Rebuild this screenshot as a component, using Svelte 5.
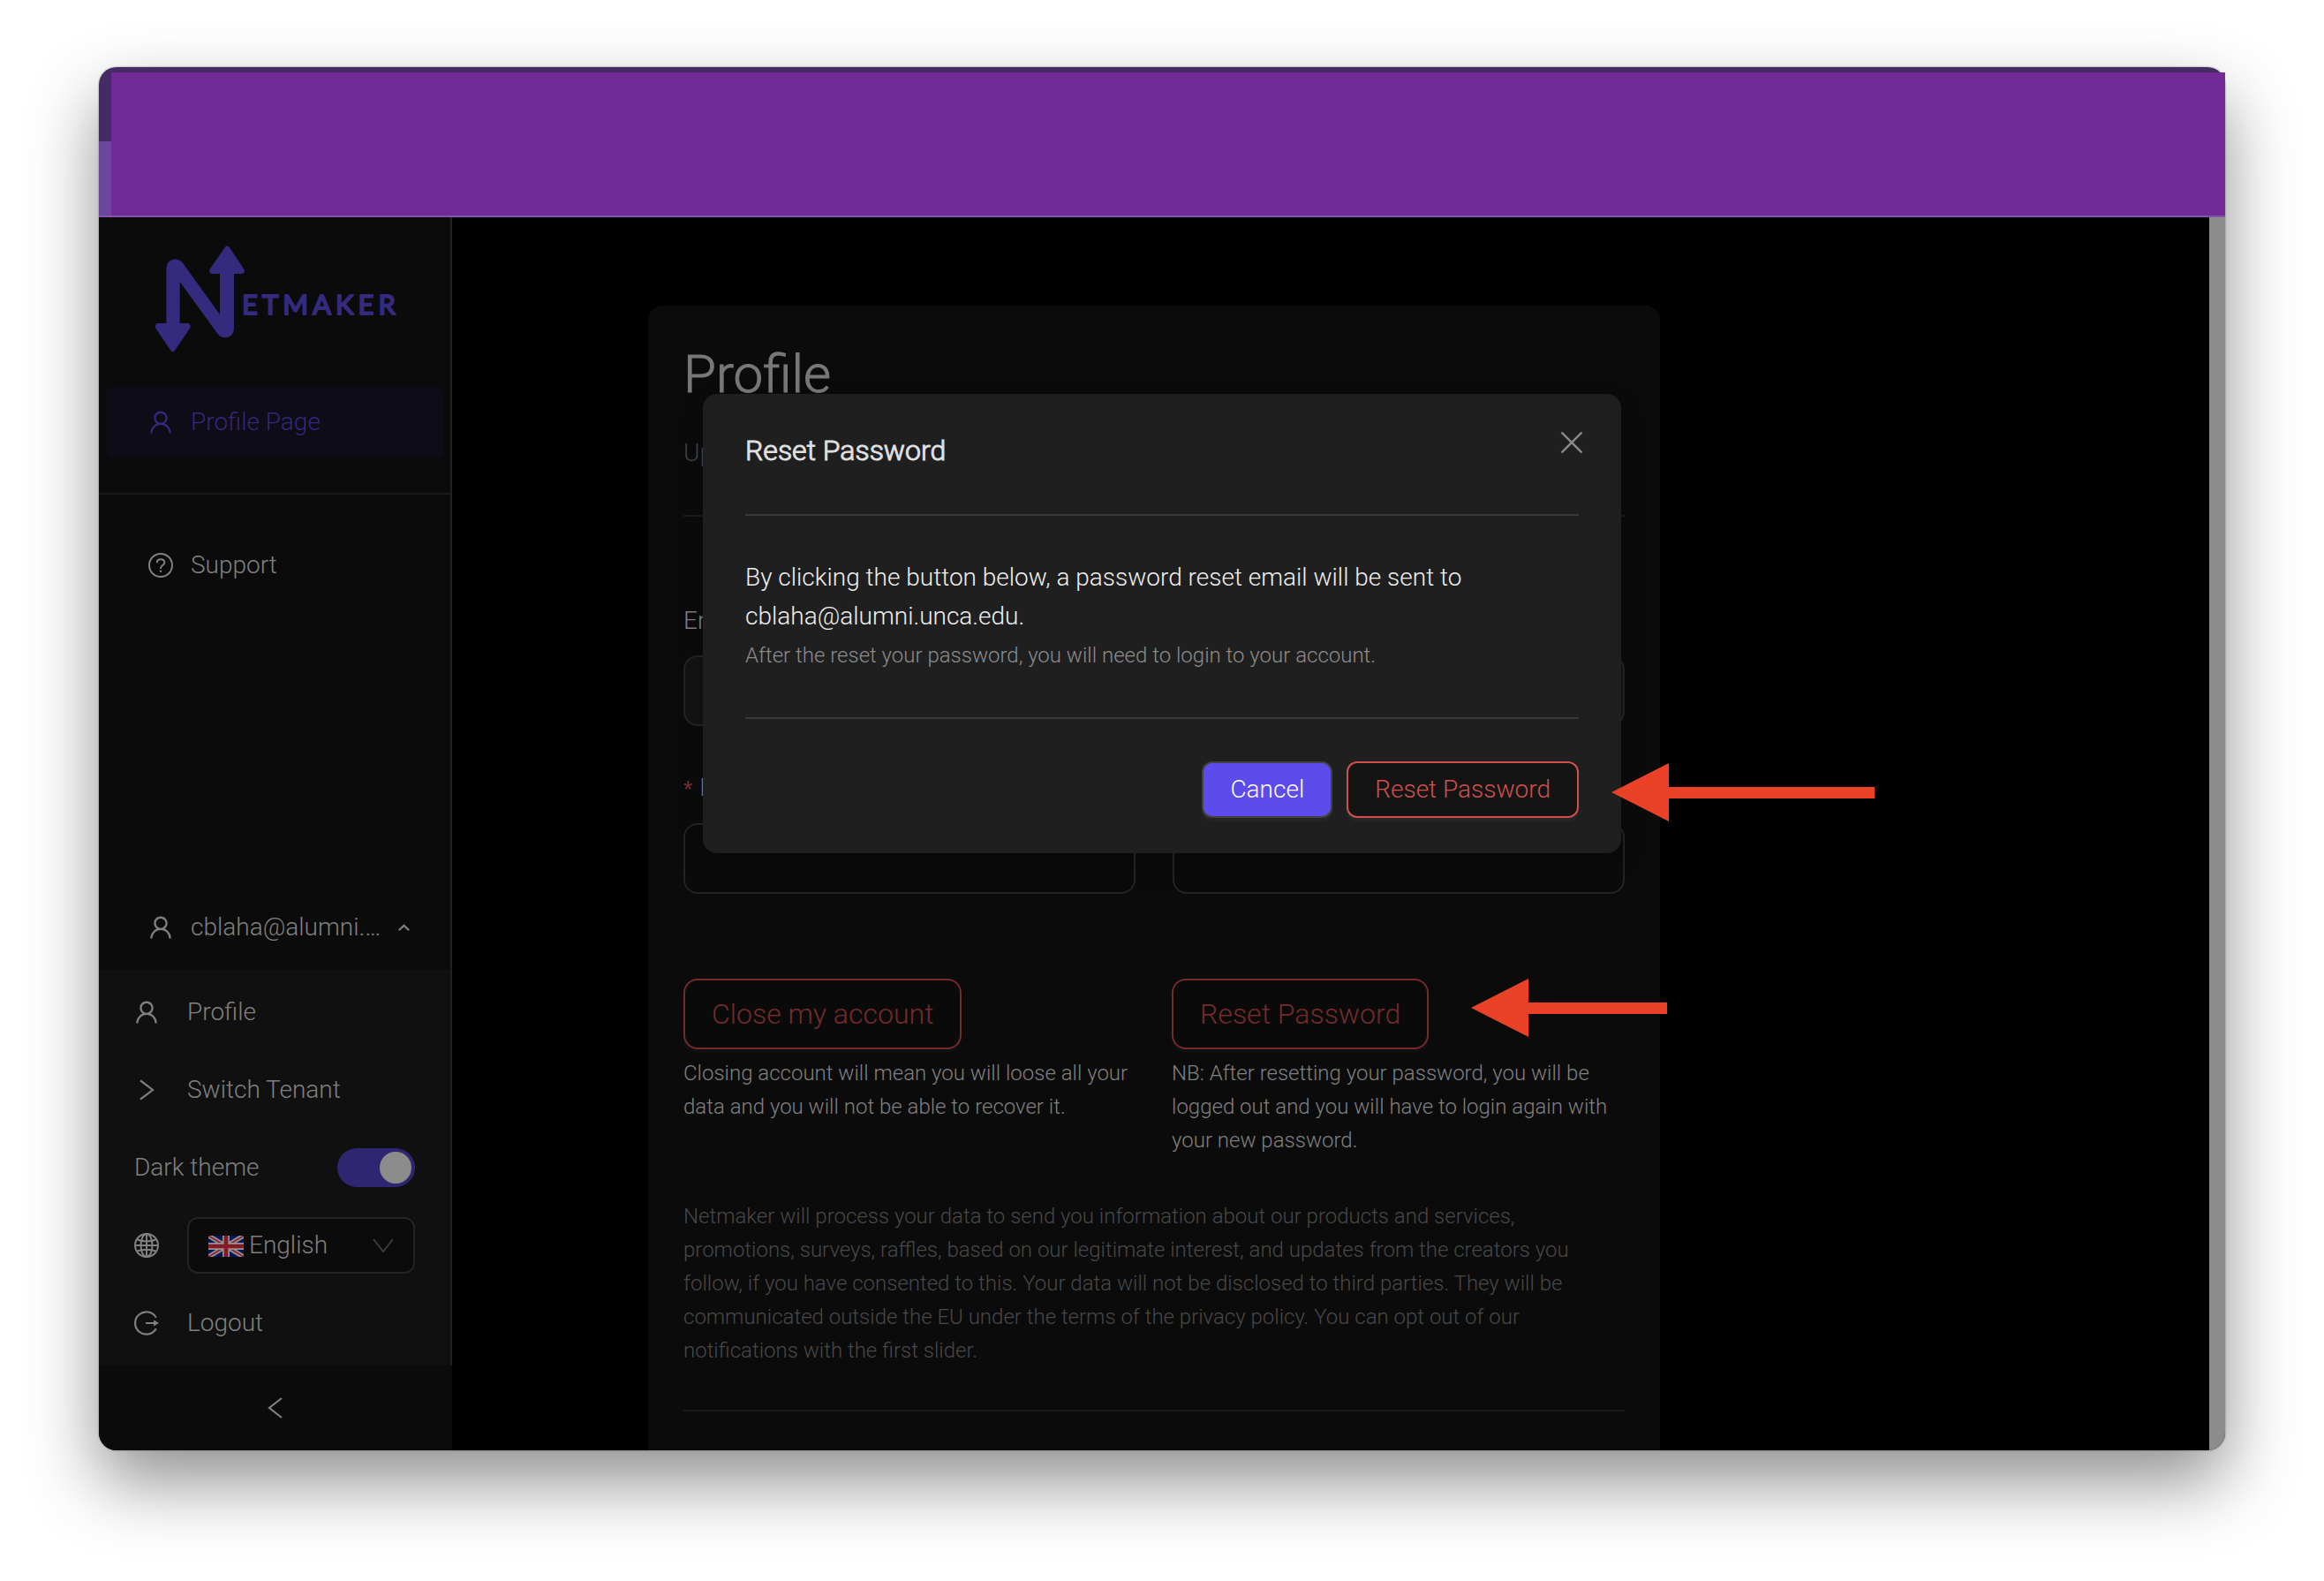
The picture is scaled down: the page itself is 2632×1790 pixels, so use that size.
<script>
  let darkTheme = $state(true);
  let language = $state('en');
</script>

{#snippet userIcon()}
  <svg class="icon" viewBox="64 64 896 896" fill="currentColor" aria-hidden="true">
    <path d="M858.5 763.6a374 374 0 00-80.6-119.5 375.63 375.63 0 00-119.5-80.6c-.4-.2-.8-.3-1.2-.5C719.5 518 760 444.7 760 362c0-137-111-248-248-248S264 225 264 362c0 82.7 40.5 156 102.8 201.1-.4.2-.8.3-1.2.5-44.8 18.9-85 46-119.5 80.6a375.63 375.63 0 00-80.6 119.5A371.7 371.7 0 00136 901.8a8 8 0 008 8.2h60c4.4 0 7.9-3.5 8-7.8 2-77.2 33-149.5 87.8-204.3 56.7-56.7 132-87.9 212.2-87.9s155.5 31.2 212.2 87.9C779 752.7 810 825 812 902.2c.1 4.4 3.6 7.8 8 7.8h60a8 8 0 008-8.2c-1-47.8-10.9-94.3-29.5-138.2zM512 534c-45.9 0-89.1-17.9-121.6-50.4S340 407.9 340 362c0-45.9 17.9-89.1 50.4-121.6S466.1 190 512 190s89.1 17.9 121.6 50.4S684 316.1 684 362c0 45.9-17.9 89.1-50.4 121.6S557.9 534 512 534z" />
  </svg>
{/snippet}

<div class="desktop">
  <div class="window">
    <header class="titlebar">
      <div class="banner"></div>
    </header>

    <div class="app">
      <aside class="sidebar">
        <div class="side-main">
          <svg class="logo" viewBox="0 0 272 120" role="img" aria-label="Netmaker">
            <g transform="scale(0.3333)">
              <path d="M37 270V82C37 44 76 36 95 62L219 234V90H267V280C267 316 228 322 211 299L83 123V270Z" />
              <path d="M237 5Q244 -4 251 5L301 80Q307 94 292 96H194Q179 94 185 80Z" />
              <path d="M52 356Q59 365 66 356L117 281Q123 266 108 264H11Q-4 266 1 281Z" />
            </g>
            <text x="98" y="78">ETMAKER</text>
          </svg>

          <nav class="menu">
            <a class="item active" href="#profile-page">{@render userIcon()}<span>Profile Page</span></a>
          </nav>
          <hr class="side-rule" />
          <nav class="menu">
            <a class="item" href="#support">
              <svg class="icon" viewBox="0 0 28 28" fill="none" stroke="currentColor" stroke-width="2" aria-hidden="true">
                <circle cx="14" cy="14" r="13" />
                <path d="M9.800 11.200C9.800 8.600 11.600 7.300 14 7.300s4.300 1.400 4.300 3.600c0 3-4.300 3.200-4.300 6.400v.8" />
                <circle cx="14" cy="20.700" r="1.200" fill="currentColor" stroke="none" />
              </svg>
              <span>Support</span>
            </a>
          </nav>

          <div class="menu account-toggle">
            <button class="item" type="button" aria-expanded="true">
              {@render userIcon()}
              <span class="grow">cblaha@alumni.…</span>
              <svg class="caret" viewBox="0 0 18 12" fill="none" stroke="currentColor" stroke-width="3" aria-hidden="true"><path d="M1 10.500 9 3l8 7.500" /></svg>
            </button>
          </div>

          <div class="panel">
            <a class="row" href="#profile">{@render userIcon()}<span>Profile</span></a>
            <a class="row" href="#tenant">
              <svg class="icon" viewBox="0 0 28 28" fill="none" stroke="currentColor" stroke-width="2.200" aria-hidden="true"><path d="M7 3.300 21 14 7 24.700" /></svg>
              <span>Switch Tenant</span>
            </a>
            <label class="row between">
              <span>Dark theme</span>
              <input class="switch" type="checkbox" role="switch" bind:checked={darkTheme} />
            </label>
            <div class="row">
              <svg class="icon" viewBox="0 0 28 28" fill="none" stroke="currentColor" stroke-width="2" aria-hidden="true">
                <circle cx="14" cy="14" r="13" />
                <ellipse cx="14" cy="14" rx="6.500" ry="13" />
                <path d="M14 1v26M1 14h26M3.500 7.500C9 10 19 10 24.500 7.500M3.500 20.500C9 18 19 18 24.500 20.500" />
              </svg>
              <div class="select">
                <svg class="flag" viewBox="0 0 60 36" preserveAspectRatio="none" aria-hidden="true">
                  <path d="M0 0h60v36H0z" fill="#06155a" />
                  <path d="M0 0 60 36M60 0 0 36" stroke="#949494" stroke-width="8" />
                  <path d="M0 0 60 36M60 0 0 36" stroke="#8a1f28" stroke-width="2.500" />
                  <path d="M30 0v36M0 18h60" stroke="#949494" stroke-width="12" />
                  <path d="M30 0v36M0 18h60" stroke="#861a22" stroke-width="7" />
                </svg>
                <select aria-label="Language" bind:value={language}>
                  <option value="en">English</option>
                </select>
                <svg class="arrow-down" viewBox="0 0 24 16" fill="none" stroke="currentColor" stroke-width="2" aria-hidden="true"><path d="M1 1 12 15 23 1" /></svg>
              </div>
            </div>
            <a class="row" href="#logout">
              <svg class="icon" viewBox="0 0 28 28" fill="none" stroke="currentColor" stroke-width="2.200" aria-hidden="true">
                <path d="M24.800 7.700A12.700 12.700 0 1 0 24.800 20.300M13 14h10" />
                <path d="M22 10.500 28 14 22 17.500z" fill="currentColor" stroke="none" />
              </svg>
              <span>Logout</span>
            </a>
          </div>
        </div>
        <button class="collapse" type="button" aria-label="Collapse menu">
          <svg class="icon" viewBox="0 0 28 28" fill="none" stroke="currentColor" stroke-width="2.200" aria-hidden="true"><path d="M21 3 7 14 21 25" /></svg>
        </button>
      </aside>

      <main class="content">
        <section class="card">
          <h1>Profile</h1>
          <p class="lead">Update</p>
          <hr />
          <form class="fields">
            <div class="field wide">
              <label for="email">Email</label>
              <input id="email" type="email" disabled />
            </div>
            <div class="field">
              <label for="first"><span class="star">*</span>First Name</label>
              <input id="first" type="text" />
            </div>
            <div class="field">
              <label for="last"><span class="star">*</span>Last</label>
              <input id="last" type="text" />
            </div>
          </form>
          <div class="actions">
            <div>
              <button class="danger large" type="button">Close my account</button>
              <p>Closing account will mean you will loose all your data and you will not be able to recover it.</p>
            </div>
            <div>
              <div class="pointed">
                <button class="danger large" type="button">Reset Password</button>
                <svg class="pointer short" viewBox="0 0 222 66" aria-hidden="true"><path d="M0 33 65 0V27H222V40H65V66z" /></svg>
              </div>
              <p>NB: After resetting your password, you will be logged out and you will have to login again with your new password.</p>
            </div>
          </div>
          <p class="legal">Netmaker will process your data to send you information about our products and services, promotions, surveys, raffles, based on our legitimate interest, and updates from the creators you follow, if you have consented to this. Your data will not be disclosed to third parties. They will be communicated outside the EU under the terms of the privacy policy. You can opt out of our notifications with the first slider.</p>
          <hr />
        </section>
      </main>
      <div class="scrollbar"></div>

      <div class="overlay">
        <div class="modal" role="dialog" aria-labelledby="dialog-title">
          <button class="close" type="button" aria-label="Close">
            <svg viewBox="0 0 26 26" fill="none" stroke="currentColor" stroke-width="2.400" aria-hidden="true"><path d="M1.500 1.500 24.500 24.500M24.500 1.500 1.500 24.500" /></svg>
          </button>
          <h2 id="dialog-title">Reset Password</h2>
          <hr />
          <p>By clicking the button below, a password reset email will be sent to cblaha@alumni.unca.edu.</p>
          <p class="note">After the reset your password, you will need to login to your account.</p>
          <hr />
          <footer>
            <button class="primary" type="button">Cancel</button>
            <button class="danger" type="button">Reset Password</button>
          </footer>
          <svg class="pointer long" viewBox="0 0 298 66" aria-hidden="true"><path d="M0 33 65 0V27H298V40H65V66z" /></svg>
        </div>
      </div>
    </div>
  </div>
</div>

<style>
  :global(body) {
    background: #fff;
  }

  .desktop {
    box-sizing: border-box;
    height: 100vh;
    padding: 76px 112px 148px;
    display: flex;
    font-family: Roboto, "Liberation Sans", sans-serif;
    font-size: 28px;
    font-weight: 300;
    line-height: 44px;
    color: #808080;
  }
  .desktop *,
  .desktop *::before {
    box-sizing: border-box;
  }

  .window {
    flex: 1;
    min-width: 0;
    display: flex;
    flex-direction: column;
    border-radius: 20px;
    box-shadow: 0 0 2px rgba(0, 0, 0, 0.5), 0 36px 80px rgba(0, 0, 0, 0.44);
  }

  .titlebar {
    height: 170px;
    padding: 6px 0 0 14px;
    display: flex;
    border-radius: 20px 20px 0 0;
    border-bottom: 2px solid #8453ae;
    background: linear-gradient(#432b63 84px, #6a469c 84px);
  }
  .banner {
    flex: 1;
    background: #712997;
  }

  .app {
    flex: 1;
    min-height: 0;
    position: relative;
    display: flex;
    overflow: hidden;
    border-radius: 0 0 20px 20px;
    background: #000;
  }

  h1, h2, p { margin: 0; }
  hr {
    margin: 48px 0;
    border: 0;
    height: 2px;
    background: #1b1b1b;
  }
  a { color: inherit; text-decoration: none; }
  button, input, select { font: inherit; color: inherit; }
  button { cursor: pointer; }

  .sidebar {
    flex: none;
    width: 400px;
    display: flex;
    flex-direction: column;
    background: #0b0b0b;
  }
  .side-main {
    flex: 1;
    display: flex;
    flex-direction: column;
    border-right: 2px solid #222;
  }
  .logo {
    width: 272px;
    height: 120px;
    margin: 32px 0 40px 64px;
    fill: #342a7e;
    overflow: visible;
  }
  .logo text {
    font-family: Lato, sans-serif;
    font-size: 31px;
    font-weight: 400;
    letter-spacing: 5px;
    stroke: #342a7e;
    stroke-width: 2;
    stroke-linejoin: round;
  }
  .icon {
    flex: none;
    width: 28px;
    height: 28px;
  }
  .menu { padding: 0 8px; }
  .item {
    width: 100%;
    height: 80px;
    padding: 0 38px 0 48px;
    display: flex;
    align-items: center;
    gap: 20px;
    border: 0;
    border-radius: 16px;
    background: none;
    text-align: left;
  }
  .item.active {
    border-radius: 8px;
    background: #0e0c16;
    color: #32287c;
  }
  .side-rule { margin: 40px 0; }
  .grow { flex: 1; }
  .caret { width: 18px; height: 12px; }
  .account-toggle { margin-top: auto; padding-bottom: 8px; }

  .panel {
    padding: 4px 40px;
    background: #101010;
  }
  .row {
    height: 88px;
    display: flex;
    align-items: center;
    gap: 32px;
  }
  .between { justify-content: space-between; }
  .switch {
    appearance: none;
    width: 88px;
    height: 44px;
    margin: 0;
    padding: 4px;
    border-radius: 22px;
    background: #333;
  }
  .switch::before {
    content: "";
    display: block;
    width: 36px;
    height: 36px;
    border-radius: 50%;
    background: #8c8c8c;
  }
  .switch:checked { background: #2f2672; }
  .switch:checked::before { margin-left: auto; }
  .select {
    flex: 1;
    position: relative;
  }
  .select select {
    display: block;
    appearance: none;
    width: 100%;
    height: 64px;
    padding: 0 56px 0 68px;
    border: 2px solid #242424;
    border-radius: 12px;
    background: #0b0b0b;
  }
  .flag {
    position: absolute;
    left: 24px;
    top: 21px;
    width: 40px;
    height: 24px;
  }
  .arrow-down {
    position: absolute;
    right: 24px;
    top: 24px;
    width: 24px;
    height: 16px;
    color: #3c3c3c;
    pointer-events: none;
  }
  .collapse {
    height: 96px;
    display: flex;
    align-items: center;
    justify-content: center;
    border: 0;
    background: none;
  }

  .content {
    flex: 1;
    min-width: 0;
    padding: 100px 0 0 222px;
    overflow: hidden;
  }
  .card {
    max-width: 1146px;
    min-height: 100%;
    padding: 40px;
    border-radius: 16px 16px 0 0;
    background: #0b0b0b;
  }
  h1 {
    font-size: 60px;
    font-weight: 300;
    line-height: 76px;
    color: #787878;
    -webkit-text-stroke: 1px currentColor;
  }
  .lead { margin-top: 29px; color: #434343; }
  .fields {
    margin-top: 96px;
    display: grid;
    grid-template-columns: 1fr 1fr;
    gap: 48px 42px;
  }
  .field {
    display: flex;
    flex-direction: column;
    gap: 17px;
  }
  .wide { grid-column: 1 / -1; }
  .field input {
    width: 100%;
    height: 80px;
    padding: 0 22px;
    border: 2px solid #242424;
    border-radius: 16px;
    background: #0a0a0a;
  }
  .field input:disabled { background: #131313; }
  .star {
    margin-right: 8px;
    color: #7a2d2c;
    font-size: 24px;
    font-weight: 400;
  }
  .actions {
    margin: 96px 0 48px;
    display: grid;
    grid-template-columns: 1fr 1fr;
    gap: 40px;
  }
  .actions p {
    margin-top: 8px;
    font-size: 24px;
    line-height: 38px;
  }
  .legal {
    font-size: 24px;
    line-height: 38px;
    color: #484848;
  }

  .danger, .primary {
    height: 64px;
    padding: 0 30px;
    border: 2px solid #d0504c;
    border-radius: 12px;
    background: #141414;
    color: #d0504c;
    box-shadow: 0 4px 0 #252525;
  }
  .primary {
    border-color: #424242;
    background: #5e4beb;
    color: #fff;
  }
  .large {
    display: block;
    height: 80px;
    border-color: #742b2b;
    border-radius: 16px;
    background: #0a0a0a;
    color: #742b2b;
    font-size: 32px;
    box-shadow: 0 4px 0 #101010;
  }

  .scrollbar {
    flex: none;
    width: 18px;
    background: #8c8c8c;
  }

  .overlay {
    position: absolute;
    inset: 0;
    padding-top: 200px;
    display: flex;
    justify-content: center;
    align-items: flex-start;
  }
  .modal {
    position: relative;
    width: 1040px;
    padding: 40px 48px;
    border-radius: 16px;
    background: #1f1f1f;
    color: #f0f0f0;
    box-shadow: 0 12px 32px rgba(0, 0, 0, 0.16);
  }
  .modal hr { background: #3a3a3a; }
  h2 {
    font-size: 32px;
    font-weight: 300;
    line-height: 48px;
    color: #e0e0e0;
    -webkit-text-stroke: 1px currentColor;
  }
  .modal .note {
    font-size: 24px;
    color: #8c8c8c;
  }
  .close {
    position: absolute;
    top: 33px;
    right: 34px;
    width: 44px;
    height: 44px;
    padding: 9px;
    border: 0;
    background: none;
    color: #8c8c8c;
  }
  .close svg { display: block; width: 26px; height: 26px; }
  footer {
    display: flex;
    justify-content: flex-end;
    gap: 16px;
  }

  .pointed {
    position: relative;
    width: fit-content;
  }
  .pointer {
    position: absolute;
    height: 66px;
    fill: #eb4127;
  }
  .short { left: 100%; top: 0; width: 222px; margin-left: 48px; }
  .long { right: -287px; bottom: 36px; width: 298px; }
</style>
